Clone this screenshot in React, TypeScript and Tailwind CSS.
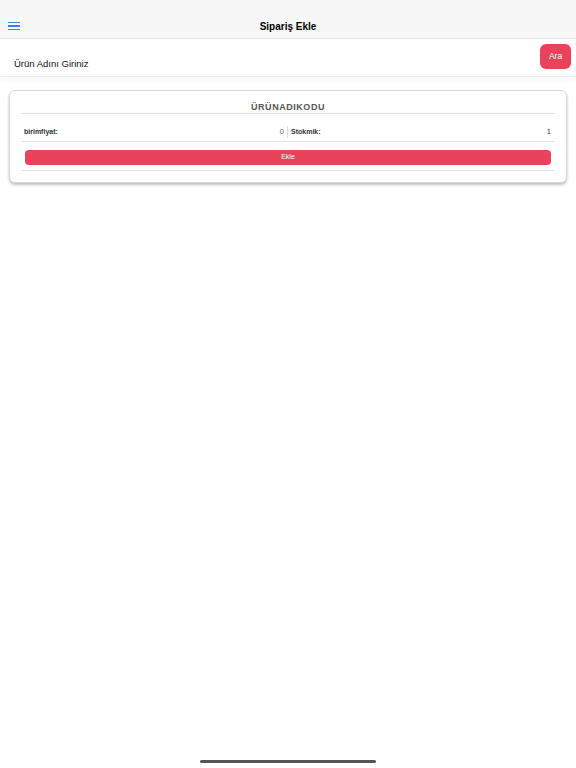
export default function App() {
  return (
    <div className="relative min-h-[768px] w-full bg-white font-['Helvetica','Liberation_Sans',sans-serif] text-black">
      {/* Header */}
      <header className="flex h-[39px] items-end border-b border-[#e4e4e6] bg-[#f7f7f8] px-2 pb-[3px]">
        <button className="mb-[1px] flex h-[16px] w-[13px] flex-col justify-center gap-[2px]">
          <span className="block h-[1.5px] w-[12px] bg-[#3b82d6]" />
          <span className="block h-[1.5px] w-[12px] bg-[#3b82d6]" />
          <span className="block h-[1.5px] w-[12px] bg-[#3b82d6]" />
        </button>
        <h1 className="flex-1 pr-[13px] text-center text-[10px] font-bold leading-[16px]">Sipariş Ekle</h1>
      </header>

      {/* Search row */}
      <div className="flex h-[38px] items-start border-b border-[#ececec] bg-white shadow-[0_3px_6px_rgba(0,0,0,0.04)]">
        <p className="mt-[18px] flex-1 pl-[14px] text-[9.5px] leading-[14px] text-[#111]">Ürün Adını Giriniz</p>
        <button className="mr-[5px] mt-[5px] flex h-[25px] w-[31px] items-center justify-center rounded-[6px] bg-[#e8435a] text-[8.5px] text-white">
          Ara
        </button>
      </div>

      {/* Product card */}
      <div className="mx-[9px] mt-[13px] rounded-[6px] border border-[#d8d8d8] bg-white px-[11px] pb-[11px] shadow-[0_2px_3px_rgba(0,0,0,0.25)]">
        <div className="border-b border-[#e2e2e2] pb-0 pt-[11px] text-center text-[9px] font-bold leading-[11px] tracking-[0.06em] text-[#555]">
          ÜRÜNADIKODU
        </div>
        <div className="flex h-[28px] items-end border-b border-[#e2e2e2] pb-[3px] text-[7px] leading-[9px] text-[#333]">
          <div className="mb-[2px] flex flex-1 items-center justify-between pl-[3px] pr-[3px]">
            <span className="font-bold">birimfiyat:</span>
            <span className="text-[7.5px] text-[#666]">0</span>
          </div>
          <div className="h-[12px] w-px bg-[#dcdcdc]" />
          <div className="mb-[2px] flex flex-1 items-center justify-between pl-[3px] pr-[4px]">
            <span className="font-bold">Stokmik:</span>
            <span className="text-[7.5px] text-[#333]">1</span>
          </div>
        </div>
        <div className="border-b border-[#e2e2e2] px-[4px] pb-[5px] pt-[8px]">
          <button className="flex h-[15px] w-full items-center justify-center rounded-[4px] bg-[#e8435a] text-[7px] text-white">
            Ekle
          </button>
        </div>
      </div>

      {/* Home indicator */}
      <div className="absolute bottom-[5px] left-[200px] h-[3px] w-[176px] rounded-full bg-[#555]" />
    </div>
  );
}
